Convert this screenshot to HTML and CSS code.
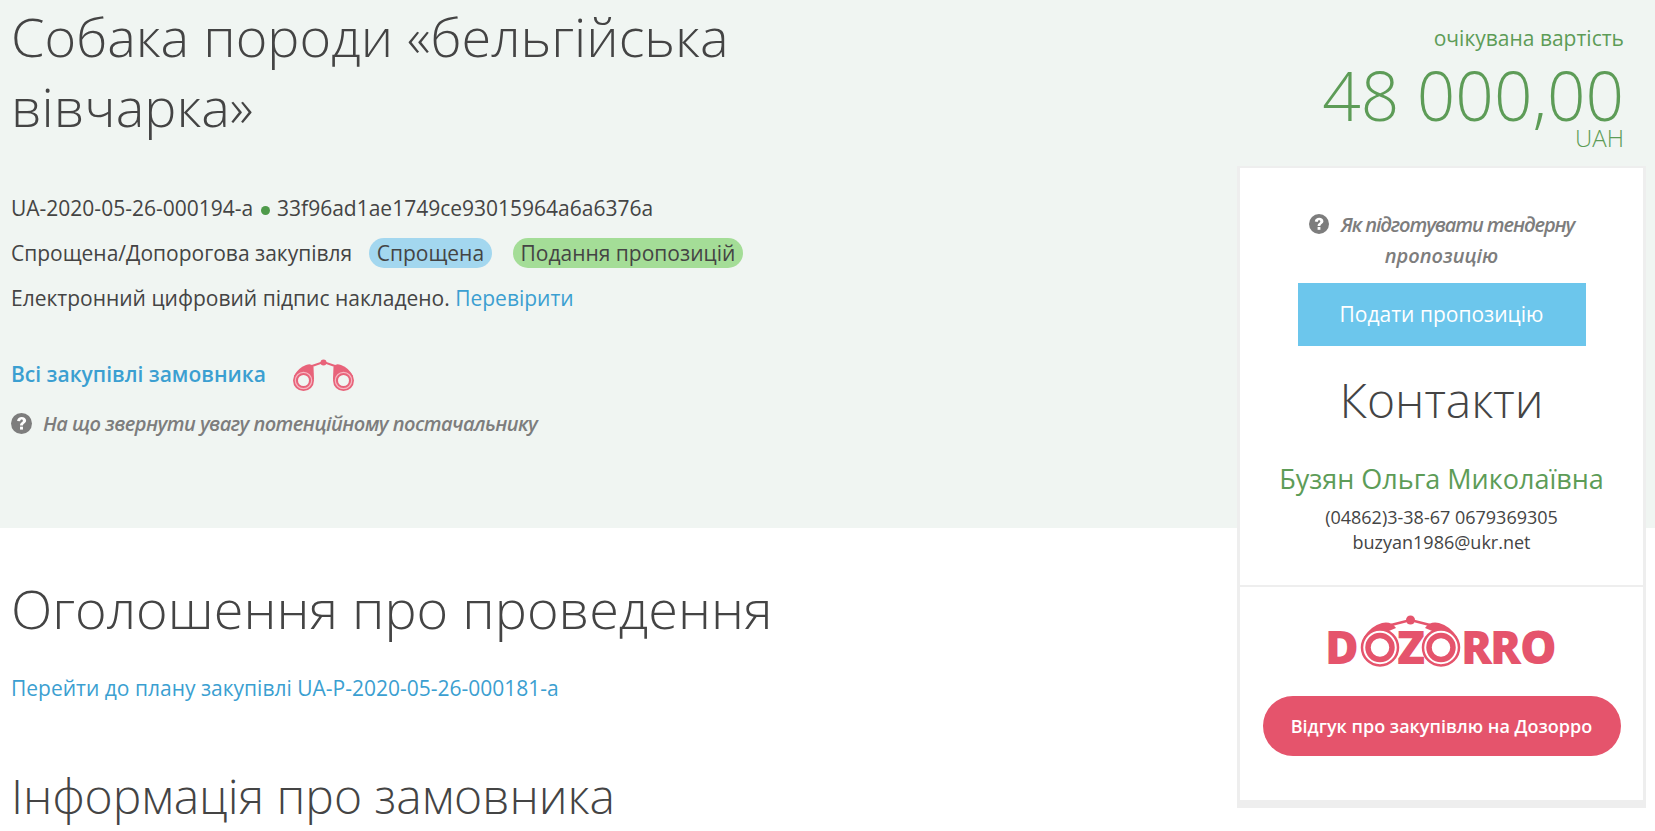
FILE: index.html
```html
<!DOCTYPE html>
<html lang="uk">
<head>
    <meta charset="UTF-8">
    <meta name="viewport" content="width=device-width, initial-scale=1.0">
    <title>Собака породи «бельгійська вівчарка»</title>
    <link rel="stylesheet" href="styles.css">
</head>
<body>
    <div class="page">
        <section class="hero">
            <div class="hero-top">
                <h1 class="tender-title">Собака породи «бельгійська вівчарка»</h1>
                <div class="price">
                    <div class="price-label">очікувана вартість</div>
                    <div class="price-value">48 000,00</div>
                    <div class="price-currency">UAH</div>
                </div>
            </div>
            <div class="meta-line">UA-2020-05-26-000194-a <span class="dot"></span> 33f96ad1ae1749ce93015964a6a6376a</div>
            <div class="meta-line">
                Спрощена/Допорогова закупівля
                <span class="pill pill-blue">Спрощена</span>
                <span class="pill pill-green">Подання пропозицій</span>
            </div>
            <div class="meta-line">Електронний цифровий підпис накладено. <a href="#">Перевірити</a></div>
            <div class="buyer-line">
                <a href="#" class="buyer-link">Всі закупівлі замовника</a>
                <svg class="binoculars" viewBox="0 0 61 33" width="61" height="33">
                    <path d="M19 7 L30.500 3 L42 7" fill="none" stroke="#e8637a" stroke-width="2"/>
                    <circle cx="30.500" cy="3.500" r="3" fill="#e8637a"/>
                    <path d="M1 17 Q5 9 13 6 Q19 4 20.500 8 L21 20 A10.500 10.500 0 0 1 1 17 Z" fill="#e8637a"/>
                    <path d="M60 17 Q56 9 48 6 Q42 4 40.500 8 L40 20 A10.500 10.500 0 0 0 60 17 Z" fill="#e8637a"/>
                    <circle cx="10.500" cy="21.500" r="10.500" fill="#e8637a"/>
                    <circle cx="50.500" cy="21.500" r="10.500" fill="#e8637a"/>
                    <circle cx="10.500" cy="21.500" r="8.200" fill="none" stroke="#f6b6c1" stroke-width="1.200"/>
                    <circle cx="50.500" cy="21.500" r="8.200" fill="none" stroke="#f6b6c1" stroke-width="1.200"/>
                    <circle cx="10.500" cy="21.500" r="5.500" fill="#f0f5f2"/>
                    <circle cx="50.500" cy="21.500" r="5.500" fill="#f0f5f2"/>
                </svg>
            </div>
            <div class="hint">
                <svg class="hint-icon" viewBox="0 0 20 20" width="21" height="21">
                    <circle cx="10" cy="10" r="10" fill="#7d7d7d"/>
                    <path d="M5.800 7.600 C6 5 8 3.800 10.200 3.800 C12.600 3.800 14.400 5.200 14.400 7.200 C14.400 9.800 11.400 9.800 11.400 12 L8.600 12 C8.600 9 11.300 8.900 11.300 7.400 C11.300 6.700 10.900 6.300 10.100 6.300 C9.300 6.300 8.800 6.900 8.700 7.900 Z" fill="#fff"/>
                    <rect x="8.600" y="13" width="2.800" height="2.800" fill="#fff"/>
                </svg>
                <em>На що звернути увагу потенційному постачальнику</em>
            </div>
        </section>

        <section class="content">
            <h2 class="section-title">Оголошення про проведення</h2>
            <a href="#" class="plan-link">Перейти до плану закупівлі UA-P-2020-05-26-000181-a</a>
            <h2 class="section-title section-title-small">Інформація про замовника</h2>
        </section>

        <aside class="side-card">
            <div class="side-top">
                <div class="side-hint">
                    <div class="side-hint-first">
                        <svg class="hint-icon" viewBox="0 0 20 20" width="20" height="20">
                            <circle cx="10" cy="10" r="10" fill="#7d7d7d"/>
                            <path d="M5.800 7.600 C6 5 8 3.800 10.200 3.800 C12.600 3.800 14.400 5.200 14.400 7.200 C14.400 9.800 11.400 9.800 11.400 12 L8.600 12 C8.600 9 11.300 8.900 11.300 7.400 C11.300 6.700 10.900 6.300 10.100 6.300 C9.300 6.300 8.800 6.900 8.700 7.900 Z" fill="#fff"/>
                            <rect x="8.600" y="13" width="2.800" height="2.800" fill="#fff"/>
                        </svg>
                        <em>Як підготувати тендерну</em>
                    </div>
                    <em>пропозицію</em>
                </div>
                <a href="#" class="submit-btn">Подати пропозицію</a>
                <h3 class="contacts-title">Контакти</h3>
                <div class="contact-name">Бузян Ольга Миколаївна</div>
                <div class="contact-info">(04862)3-38-67 0679369305<br>buzyan1986@ukr.net</div>
            </div>
            <div class="side-bottom">
                <svg class="dozorro-logo" viewBox="-6 0 240 62" width="240" height="62">
                    <text class="logo-text" x="-3 33.500 69 94.500 133 162 192" y="49">DOZORRO</text>
                    <path d="M36 22 Q43 11 54 8 Q63 6 68 13 L56 18 Z" fill="#e5546c"/>
                    <path d="M129 22 Q122 11 111 8 Q102 6 97 13 L109 18 Z" fill="#e5546c"/>
                    <circle cx="52" cy="32.500" r="18" fill="#fff" stroke="#e5546c" stroke-width="2.500"/>
                    <circle cx="113" cy="32.500" r="18" fill="#fff" stroke="#e5546c" stroke-width="2.500"/>
                    <circle cx="52" cy="32.500" r="12" fill="#fff" stroke="#e5546c" stroke-width="5.500"/>
                    <circle cx="113" cy="32.500" r="12" fill="#fff" stroke="#e5546c" stroke-width="5.500"/>
                    <path d="M63 10 L82.500 5 L102 10" fill="none" stroke="#e5546c" stroke-width="2.500"/>
                    <circle cx="82.500" cy="5" r="4.500" fill="#e5546c"/>
                </svg>
                <a href="#" class="dozorro-btn">Відгук про закупівлю на Дозорро</a>
            </div>
        </aside>
    </div>
</body>
</html>
```
FILE: styles.css
```css
html, body {
    margin: 0;
    padding: 0;
}
body {
    font-family: 'Open Sans', sans-serif;
    font-size: 21px;
    color: #444;
    background: #fff;
    overflow: hidden;
}
a {
    color: #3b9fd1;
    text-decoration: none;
}
.page {
    position: relative;
    height: 831px;
    overflow: hidden;
}
.hero {
    background: #f0f5f2;
    height: 528px;
    box-sizing: border-box;
    padding: 0 31px 0 11px;
}
.hero-top {
    display: flex;
    justify-content: space-between;
    height: 193px;
}
.tender-title {
    margin: 1px 0 0;
    width: 760px;
    font-size: 54px;
    font-weight: 300;
    line-height: 70px;
}
.price {
    text-align: right;
    color: #5d9c57;
}
.price-label {
    margin-top: 24px;
    font-size: 21px;
    line-height: 28px;
}
.price-value {
    margin-top: 8px;
    font-size: 67.500px;
    font-weight: 300;
    line-height: 70px;
}
.price-currency {
    margin-top: -4px;
    font-size: 24px;
    font-weight: 300;
    line-height: 24px;
}
.meta-line {
    line-height: 30px;
    margin-bottom: 15px;
    white-space: nowrap;
}
.dot {
    display: inline-block;
    width: 9px;
    height: 9px;
    margin: 0 2px;
    border-radius: 50%;
    background: #4e9a4a;
    vertical-align: 1px;
}
.pill {
    display: inline-block;
    padding: 0 7.500px;
    margin-left: 11.500px;
    border-radius: 15px;
    vertical-align: top;
}
.pill-blue {
    background: #a3d7ef;
}
.pill-green {
    background: #a4dd97;
    margin-left: 16px;
}
.buyer-line {
    display: flex;
    align-items: center;
    margin-top: 41px;
    height: 40px;
}
.buyer-link {
    font-weight: 600;
}
.binoculars {
    margin: 3px 0 0 27px;
}
.hint {
    display: flex;
    align-items: center;
    margin-top: 16px;
    font-size: 20px;
    color: #7d7d7d;
}
.hint em {
    margin-left: 11px;
    font-weight: 600;
    letter-spacing: -0.550px;
}
.content {
    padding: 45px 0 0 11px;
}
.section-title {
    margin: 0;
    font-size: 54px;
    font-weight: 300;
    line-height: 70px;
}
.section-title-small {
    margin-top: 59px;
    font-size: 48px;
}
.plan-link {
    display: block;
    margin-top: 31px;
}
.side-card {
    position: absolute;
    top: 166px;
    left: 1237px;
    width: 403px;
    height: 632px;
    background: #fff;
    border: solid #eee;
    border-width: 2px 3px 8px 3px;
}
.side-top {
    height: 417px;
    border-bottom: 2px solid #eee;
    text-align: center;
}
.side-hint {
    padding: 41px 30px 0;
    font-size: 20px;
    line-height: 31px;
    color: #7d7d7d;
}
.side-hint .hint-icon {
    vertical-align: -2px;
    margin-right: 7px;
}
.side-hint-first em {
    letter-spacing: -1.100px;
}
.side-hint em {
    font-weight: 600;
}
.submit-btn {
    display: block;
    width: 288px;
    height: 63px;
    line-height: 63px;
    margin: 12px auto 0;
    background: #6cc6ec;
    color: #fff;
}
.contacts-title {
    margin: 19px 0 0;
    font-size: 48px;
    font-weight: 300;
    line-height: 70px;
}
.contact-name {
    margin-top: 27px;
    font-size: 27px;
    line-height: 34px;
    color: #5d9c57;
}
.contact-info {
    margin-top: 9px;
    font-size: 18px;
    line-height: 25px;
}
.side-bottom {
    text-align: center;
}
.dozorro-logo {
    display: block;
    margin: 28px auto 0;
}
.logo-text {
    font-family: 'Open Sans', sans-serif;
    font-size: 46px;
    font-weight: 800;
    fill: #e5546c;
}
.dozorro-btn {
    display: block;
    width: 358px;
    height: 60px;
    line-height: 60px;
    margin: 19px auto 0;
    border-radius: 30px;
    background: #e5546c;
    color: #fff;
    font-size: 18px;
    font-weight: 600;
}
```
